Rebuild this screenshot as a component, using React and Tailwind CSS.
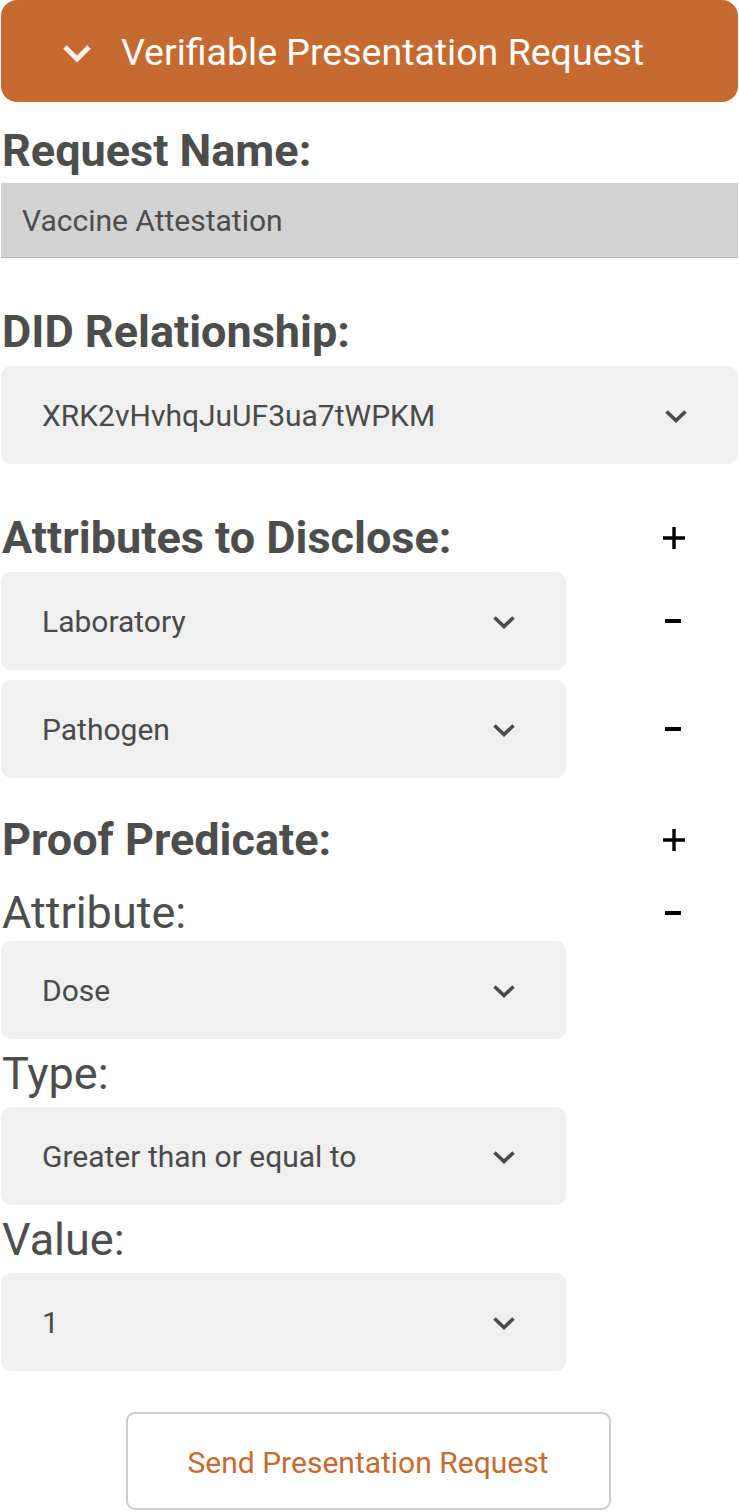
import React from "react";

const Chevron = ({ className = "" }) => (
  <svg width="24" height="14" viewBox="0 0 24 14" className={className}>
    <path d="M2.5 2.5 L12 11.5 L21.5 2.5" fill="none" stroke="#4a4a4a" strokeWidth="3.6" />
  </svg>
);

const Plus = () => (
  <button aria-label="add" className="w-[24px] h-[24px] flex items-center justify-center">
    <svg width="24" height="24" viewBox="0 0 24 24">
      <path d="M12 1 V23 M1 12 H23" stroke="#000" strokeWidth="3.4" />
    </svg>
  </button>
);

const Minus = () => (
  <button aria-label="remove" className="w-[24px] h-[24px] flex items-center justify-center">
    <svg width="24" height="24" viewBox="0 0 24 24">
      <rect x="3" y="10" width="16" height="4" fill="#000" />
    </svg>
  </button>
);

const Select = ({ value, wide }) => (
  <div
    className={`${wide ? "w-[737px]" : "w-[565px]"} h-[98px] rounded-[10px] bg-[#f0f0f0] flex items-center justify-between pl-[41px] pr-[50px]`}
  >
    <span className="text-[30px] leading-[36px] pt-[2px] text-[#4a4a4a]">{value}</span>
    <Chevron className="mt-[2px]" />
  </div>
);

const Heading = ({ children, className = "" }) => (
  <h2 className={`text-[45px] leading-[44px] font-bold text-[#4d4d4d] pl-[1px] ${className}`}>{children}</h2>
);

const Label = ({ children, className = "" }) => (
  <div className={`text-[45px] leading-[44px] text-[#4d4d4d] pl-[1px] ${className}`}>{children}</div>
);

export default function App() {
  const attrs = ["Laboratory", "Pathogen"];
  return (
    <div className="w-[739px] px-[1px] bg-white" style={{ fontFamily: "Roboto, 'Noto Sans', sans-serif" }}>
      <div className="h-[102px] rounded-[16px] bg-[#c56b31] flex items-center text-white">
        <svg width="32" height="22" viewBox="0 0 32 22" className="ml-[60px] mt-[6px] opacity-90">
          <path d="M4 4 L16 16 L28 4" fill="none" stroke="#fff" strokeWidth="5" />
        </svg>
        <span className="ml-[28px] text-[37.5px] leading-[44px] pt-[2px]">Verifiable Presentation Request</span>
      </div>

      <Heading className="mt-[27px]">Request Name:</Heading>
      <div className="mt-[10px] h-[75px] bg-[#d3d3d3] border-b border-[#b8b8b8] flex items-center pl-[21px]">
        <span className="text-[30px] leading-[36px] pt-[2px] text-[#4d4d4d]">Vaccine Attestation</span>
      </div>

      <Heading className="mt-[52px]">DID Relationship:</Heading>
      <div className="mt-[12px]">
        <Select value="XRK2vHvhqJuUF3ua7tWPKM" wide />
      </div>

      <div className="mt-[52px] flex items-center justify-between pr-[52px]">
        <Heading>Attributes to Disclose:</Heading>
        <Plus />
      </div>
      <div className="mt-[12px] flex flex-col gap-[10px]">
        {attrs.map((a) => (
          <div key={a} className="flex items-center justify-between pr-[52px]">
            <Select value={a} />
            <Minus />
          </div>
        ))}
      </div>

      <div className="mt-[40px] flex items-center justify-between pr-[52px]">
        <Heading>Proof Predicate:</Heading>
        <Plus />
      </div>
      <div className="mt-[29px] flex items-center justify-between pr-[52px]">
        <Label>Attribute:</Label>
        <Minus />
      </div>
      <div className="mt-[6px]">
        <Select value="Dose" />
      </div>
      <Label className="mt-[13px]">Type:</Label>
      <div className="mt-[11px]">
        <Select value="Greater than or equal to" />
      </div>
      <Label className="mt-[13px]">Value:</Label>
      <div className="mt-[11px]">
        <Select value="1" />
      </div>

      <div className="mt-[41px] pb-[2px] flex justify-center">
        <button className="ml-[-3px] w-[485px] h-[98px] rounded-[9px] border-2 border-[#cccccc] bg-white text-[#c56b31] text-[30px] pt-[2px]">
          Send Presentation Request
        </button>
      </div>
    </div>
  );
}
